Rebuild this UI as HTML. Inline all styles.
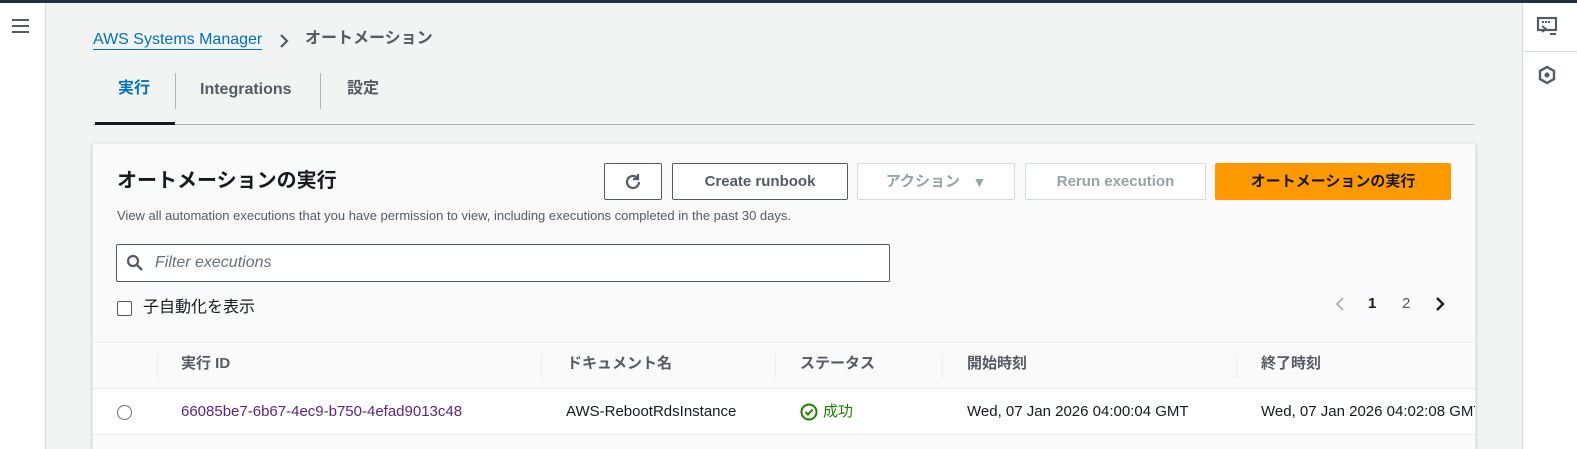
<!DOCTYPE html>
<html style="overflow:hidden"><head><meta charset="utf-8"><style>
*{box-sizing:border-box;margin:0;padding:0}
html,body{overflow:hidden}
body{width:1577px;height:449px;background:#f2f3f3;font-family:"Liberation Sans","Noto Sans CJK JP",sans-serif;color:#16191f;position:relative;font-size:14px;line-height:20px}
.a{position:absolute;white-space:nowrap}
.btn{position:absolute;top:163px;height:37px;border:1px solid #545b64;border-radius:2px;background:#fff;font-weight:bold;font-size:15px;color:#545b64;display:flex;align-items:center;justify-content:center}
.dis{border-color:#d5dbdb;color:#95a5a6}
.th{position:absolute;top:354px;font-weight:bold;font-size:15px;color:#545b64;line-height:20px;white-space:nowrap}
.sep{position:absolute;top:354px;width:1px;height:24px;background:#eaeded}
.td{position:absolute;top:402px;font-size:15px;line-height:20px;white-space:nowrap}
</style></head><body>
<div class="a" style="left:0;top:0;width:1577px;height:3px;background:#232f3e"></div>
<div class="a" style="left:0;top:3px;width:46px;height:446px;background:#fff;border-right:1px solid #d5dbdb"></div>
<div class="a" style="left:12px;top:19px;width:17px;height:2px;background:#545b64;box-shadow:0 6px 0 #545b64,0 12px 0 #545b64"></div>
<div class="a" style="left:1522px;top:3px;width:55px;height:446px;background:#fff;border-left:1px solid #d5dbdb"></div>
<div class="a" style="left:1522px;top:51px;width:55px;height:1px;background:#d5dbdb"></div>
<svg class="a" style="left:1536px;top:16px" width="26" height="22" viewBox="0 0 26 22"><rect x="2" y="2" width="18" height="12" fill="none" stroke="#545b64" stroke-width="2.2"/><path d="M6 6h2M9 6h2M12 6h2M6 10l4 3-4 3" stroke="#545b64" stroke-width="2" fill="none"/><path d="M14 18h6" stroke="#545b64" stroke-width="2"/></svg>
<svg class="a" style="left:1537px;top:65px" width="20" height="20" viewBox="0 0 20 20"><path d="M10 2l7 4v8l-7 4-7-4V6z" fill="none" stroke="#545b64" stroke-width="2.4"/><circle cx="10" cy="10" r="2.5" fill="#545b64"/></svg>
<div class="a" style="left:93px;top:30px;font-size:16px;color:#0073bb;border-bottom:1px solid #0073bb;line-height:19px">AWS Systems Manager</div>
<svg class="a" style="left:278px;top:33px" width="12" height="16" viewBox="0 0 12 16"><path d="M3 2l6 6-6 6" fill="none" stroke="#545b64" stroke-width="2.2"/></svg>
<div class="a" style="left:305px;top:29px;font-size:16px;color:#545b64;font-weight:bold">オートメーション</div>
<div class="a" style="left:118px;top:79px;font-size:16px;font-weight:bold;color:#0073bb">実行</div>
<div class="a" style="left:175px;top:73px;width:1px;height:36px;background:#aab7b8"></div>
<div class="a" style="left:200px;top:80px;font-size:16px;font-weight:bold;color:#545b64">Integrations</div>
<div class="a" style="left:320px;top:73px;width:1px;height:36px;background:#aab7b8"></div>
<div class="a" style="left:347px;top:79px;font-size:16px;font-weight:bold;color:#545b64">設定</div>
<div class="a" style="left:93px;top:124px;width:1382px;height:1px;background:#aab7b8"></div>
<div class="a" style="left:95px;top:122px;width:80px;height:3px;background:#16191f"></div>
<div class="a" style="left:92px;top:143px;width:1384px;height:306px;background:#fafafa;border:1px solid #eaeded;border-bottom:none;box-shadow:0 1px 2px rgba(0,28,36,.3)"></div>
<div class="a" style="left:117px;top:168px;font-size:20px;font-weight:bold;line-height:26px">オートメーションの実行</div>
<div class="a" style="left:117px;top:206px;font-size:13px;color:#545b64">View all automation executions that you have permission to view, including executions completed in the past 30 days.</div>
<div class="btn" style="left:604px;width:58px"><svg width="20" height="20" viewBox="0 0 20 20"><path d="M16 10a6 6 0 1 1-2-4.5" fill="none" stroke="#545b64" stroke-width="2.2"/><path d="M15 2v5h-5" fill="none" stroke="#545b64" stroke-width="2.2"/></svg></div>
<div class="btn" style="left:672px;width:176px">Create runbook</div>
<div class="btn dis" style="left:857px;width:158px">アクション&nbsp;&nbsp;&nbsp;<span style="font-size:14px">▼</span></div>
<div class="btn dis" style="left:1025px;width:181px">Rerun execution</div>
<div class="btn" style="left:1215px;width:236px;background:#ff9900;border-color:#ff9900;color:#16191f">オートメーションの実行</div>
<div class="a" style="left:116px;top:244px;width:774px;height:38px;background:#fff;border:1px solid #545b64;border-radius:2px"></div>
<svg class="a" style="left:126px;top:254px" width="18" height="18" viewBox="0 0 18 18"><circle cx="7" cy="7" r="5" fill="none" stroke="#545b64" stroke-width="2.2"/><path d="M11 11l5 5" stroke="#545b64" stroke-width="2.4"/></svg>
<div class="a" style="left:155px;top:253px;font-size:16px;font-style:italic;color:#687078">Filter executions</div>
<div class="a" style="left:117px;top:301px;width:15px;height:15px;border:1px solid #545b64;border-radius:2px;background:#fff"></div>
<div class="a" style="left:143px;top:298px;font-size:16px">子自動化を表示</div>
<svg class="a" style="left:1334px;top:296px" width="12" height="16" viewBox="0 0 12 16"><path d="M9 2L3 8l6 6" fill="none" stroke="#aab7b8" stroke-width="2"/></svg>
<div class="a" style="left:1368px;top:294px;font-size:15px;font-weight:bold">1</div>
<div class="a" style="left:1402px;top:294px;font-size:15px;color:#545b64">2</div>
<svg class="a" style="left:1434px;top:296px" width="12" height="16" viewBox="0 0 12 16"><path d="M3 2l6 6-6 6" fill="none" stroke="#16191f" stroke-width="2.4"/></svg>
<div class="a" style="left:93px;top:342px;width:1382px;height:1px;background:#eaeded"></div>
<div class="a" style="left:93px;top:388px;width:1382px;height:47px;background:#fff;border-top:1px solid #eaeded;border-bottom:1px solid #eaeded"></div>
<div class="sep" style="left:157px"></div><div class="sep" style="left:541px"></div><div class="sep" style="left:775px"></div><div class="sep" style="left:942px"></div><div class="sep" style="left:1236px"></div>
<div class="th" style="left:181px">実行 ID</div>
<div class="th" style="left:567px">ドキュメント名</div>
<div class="th" style="left:800px">ステータス</div>
<div class="th" style="left:967px">開始時刻</div>
<div class="th" style="left:1261px">終了時刻</div>
<div class="a" style="left:117px;top:405px;width:15px;height:15px;border:1px solid #687078;border-radius:50%;background:#fff"></div>
<div class="td" style="left:181px;color:#5f247f">66085be7-6b67-4ec9-b750-4efad9013c48</div>
<div class="td" style="left:566px">AWS-RebootRdsInstance</div>
<svg class="a" style="left:800px;top:403px" width="18" height="18" viewBox="0 0 18 18"><circle cx="9" cy="9" r="7.5" fill="none" stroke="#1d8102" stroke-width="2"/><path d="M5.5 9l2.5 2.5 4.5-5" fill="none" stroke="#1d8102" stroke-width="2"/></svg>
<div class="td" style="left:823px;color:#1d8102">成功</div>
<div class="td" style="left:967px">Wed, 07 Jan 2026 04:00:04 GMT</div>
<div class="td" style="left:1261px;width:214px;overflow:hidden">Wed, 07 Jan 2026 04:02:08 GMT</div>
</body></html>
